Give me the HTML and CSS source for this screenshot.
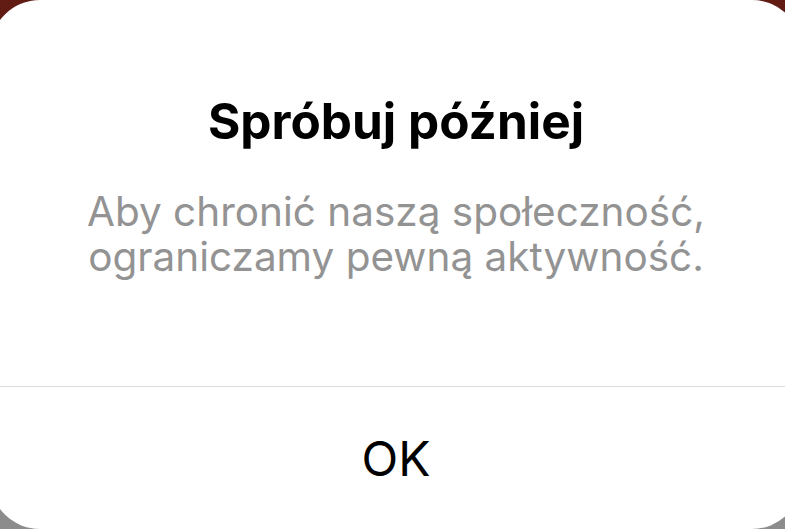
FILE: index.html
```html
<!DOCTYPE html>
<html lang="pl">
<head>
    <meta charset="UTF-8">
    <meta name="viewport" content="width=device-width, initial-scale=1.0">
    <title>Spróbuj później</title>
    <link rel="stylesheet" href="styles.css">
</head>
<body>
    <div class="alert">
        <div class="alert-body">
            <h1 class="alert-title">Spróbuj później</h1>
            <p class="alert-message">Aby chronić naszą społeczność,<br>ograniczamy pewną aktywność.</p>
        </div>
        <button class="alert-button">OK</button>
    </div>
</body>
</html>
```

FILE: styles.css
```css
html, body {
    margin: 0;
    height: 100%;
    overflow: hidden;
}
body {
    background: linear-gradient(#621b13 0%, #4a2520 35%, #8a8a8a 65%, #8c8c8c 100%);
    font-family: Inter, "Noto Sans", sans-serif;
}
.alert {
    display: flex;
    flex-direction: column;
    height: 529px;
    margin: 0 -17px 0 -10px;
    background: #fff;
    border-radius: 50px;
}
.alert-body {
    flex: 1;
    padding-top: 92px;
    text-align: center;
    border-bottom: 1.5px solid #dcdcdc;
}
.alert-title {
    margin: 0;
    font-size: 49.5px;
    line-height: 58px;
    font-weight: 700;
    color: #000;
}
.alert-message {
    margin: 39px 0 0;
    font-size: 40.5px;
    line-height: 45px;
    color: #939393;
}
.alert-button {
    height: 142px;
    border: 0;
    background: none;
    font-family: inherit;
    font-size: 48px;
    color: #000;
    padding: 0;
}
```
